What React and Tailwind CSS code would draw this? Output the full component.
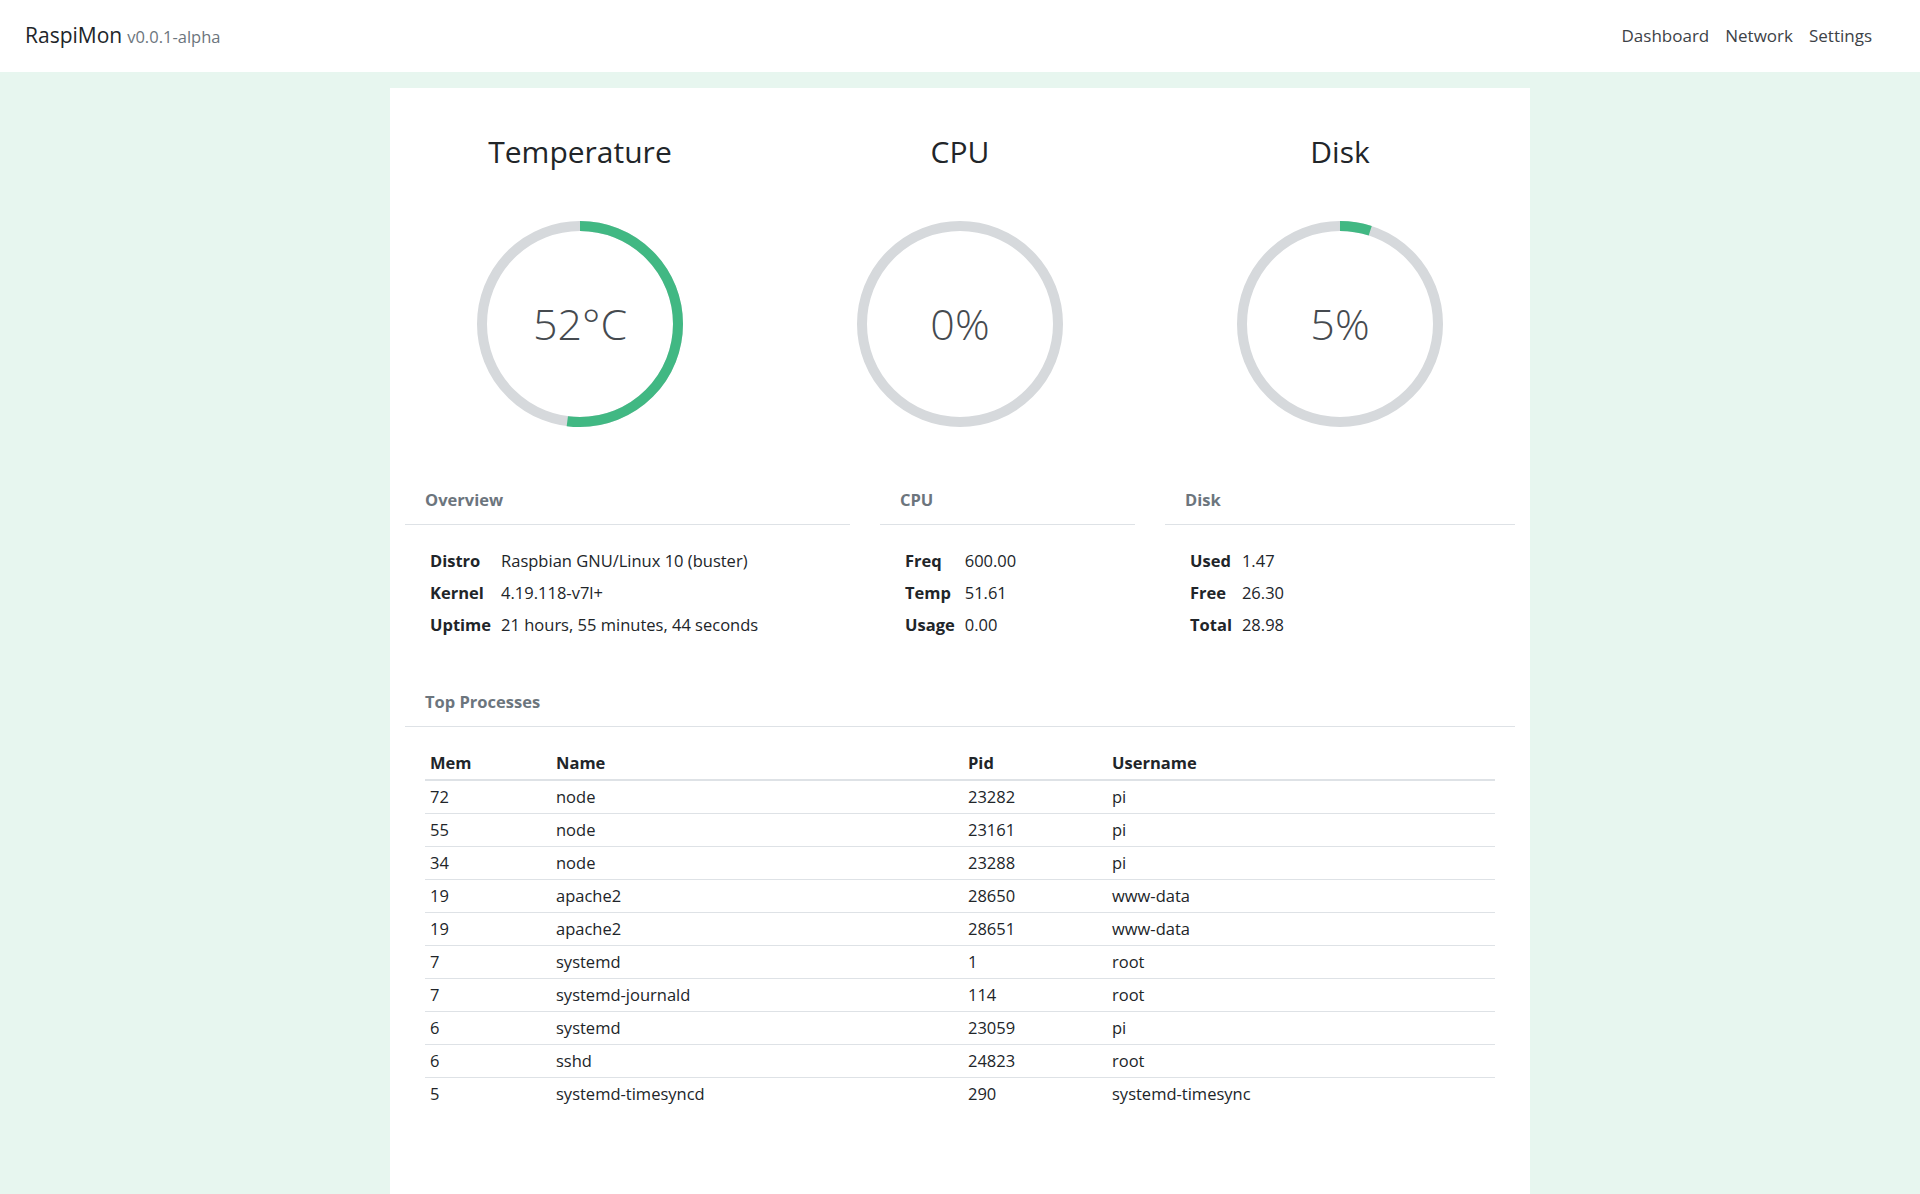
import React from 'react';

const font = { fontFamily: '"Open Sans", "Noto Sans", sans-serif' };

const processes = [
  { mem: 72, name: 'node', pid: 23282, user: 'pi' },
  { mem: 55, name: 'node', pid: 23161, user: 'pi' },
  { mem: 34, name: 'node', pid: 23288, user: 'pi' },
  { mem: 19, name: 'apache2', pid: 28650, user: 'www-data' },
  { mem: 19, name: 'apache2', pid: 28651, user: 'www-data' },
  { mem: 7, name: 'systemd', pid: 1, user: 'root' },
  { mem: 7, name: 'systemd-journald', pid: 114, user: 'root' },
  { mem: 6, name: 'systemd', pid: 23059, user: 'pi' },
  { mem: 6, name: 'sshd', pid: 24823, user: 'root' },
  { mem: 5, name: 'systemd-timesyncd', pid: 290, user: 'systemd-timesync' },
];

const RADIUS = 98;
const CIRC = 2 * Math.PI * RADIUS;

const Gauge = ({ title, value, label }) => (
  <div className="flex flex-col items-center">
    <h2 className="h-10 leading-10 text-[30px] text-[#212529]">{title}</h2>
    <div className="relative mt-[44px] w-[216px] h-[216px]">
      <svg width="216" height="216" viewBox="0 0 216 216">
        <circle cx="108" cy="108" r={RADIUS} fill="none" stroke="#d6d9dc" strokeWidth="10" />
        {value > 0 && (
          <circle
            cx="108"
            cy="108"
            r={RADIUS}
            fill="none"
            stroke="#41b883"
            strokeWidth="10"
            strokeDasharray={`${(CIRC * value) / 100} ${CIRC}`}
            transform="rotate(-90 108 108)"
          />
        )}
      </svg>
      {/* value in the middle of the ring */}
      <div className="absolute inset-0 flex items-center justify-center text-[43px] font-light text-[#454a4f]">
        {label}
      </div>
    </div>
  </div>
);

const InfoCard = ({ title, rows }) => (
  <div>
    <div className="px-5 pt-3 pb-3 border-b border-[#dee2e6]">
      <h3 className="leading-6 text-[16.5px] font-bold text-[#6c757d]">{title}</h3>
    </div>
    <div className="px-5 pt-5 pb-5">
      <table className="text-[16.5px] text-[#212529]">
        <tbody>
          {rows.map(([k, v]) => (
            <tr key={k}>
              <td className="px-[5px] py-1 leading-6 font-bold">{k}</td>
              <td className="px-[5px] py-1 leading-6">{v}</td>
            </tr>
          ))}
        </tbody>
      </table>
    </div>
  </div>
);

export default function App() {
  return (
    <div style={font} className="min-h-screen flex flex-col bg-[#e7f6ef]">
      {/* navbar */}
      <header className="h-[72px] shrink-0 bg-white flex items-center justify-between pl-[25px] pr-[40px]">
        <div className="flex items-baseline">
          <span className="text-[21px] text-[#212529]">RaspiMon</span>
          <span className="ml-[5px] text-[16.5px] text-[#6c757d]">v0.0.1-alpha</span>
        </div>
        <nav className="flex items-center text-[17px] text-[#3d4247]">
          <a className="px-2">Dashboard</a>
          <a className="px-2">Network</a>
          <a className="px-2">Settings</a>
        </nav>
      </header>

      <main className="flex-1 flex justify-center pt-4">
        <div className="w-[1140px] bg-white pt-[44px] pb-10">
          <div className="grid grid-cols-3">
            <Gauge title="Temperature" value={52} label="52°C" />
            <Gauge title="CPU" value={0} label="0%" />
            <Gauge title="Disk" value={5} label="5%" />
          </div>

          <div className="grid grid-cols-12 mt-[44px]">
            <div className="col-span-5 px-[15px]">
              <InfoCard
                title="Overview"
                rows={[
                  ['Distro', 'Raspbian GNU/Linux 10 (buster)'],
                  ['Kernel', '4.19.118-v7l+'],
                  ['Uptime', '21 hours, 55 minutes, 44 seconds'],
                ]}
              />
            </div>
            <div className="col-span-3 px-[15px]">
              <InfoCard
                title="CPU"
                rows={[
                  ['Freq', '600.00'],
                  ['Temp', '51.61'],
                  ['Usage', '0.00'],
                ]}
              />
            </div>
            <div className="col-span-4 px-[15px]">
              <InfoCard
                title="Disk"
                rows={[
                  ['Used', '1.47'],
                  ['Free', '26.30'],
                  ['Total', '28.98'],
                ]}
              />
            </div>
          </div>

          <div className="px-[15px] mt-[17px]">
            <div className="px-5 pt-3 pb-3 border-b border-[#dee2e6]">
              <h3 className="leading-6 text-[16.5px] font-bold text-[#6c757d]">Top Processes</h3>
            </div>
            <div className="px-5 pt-5">
              <table className="w-full table-fixed text-left text-[16.5px] text-[#212529]">
                <thead>
                  <tr>
                    <th className="w-[126px] px-[5px] py-1 leading-6 font-bold border-b-2 border-[#dee2e6]">Mem</th>
                    <th className="w-[412px] px-[5px] py-1 leading-6 font-bold border-b-2 border-[#dee2e6]">Name</th>
                    <th className="w-[144px] px-[5px] py-1 leading-6 font-bold border-b-2 border-[#dee2e6]">Pid</th>
                    <th className="px-[5px] py-1 leading-6 font-bold border-b-2 border-[#dee2e6]">Username</th>
                  </tr>
                </thead>
                <tbody>
                  {processes.map((p) => (
                    <tr key={p.pid} className="border-t border-[#dee2e6]">
                      <td className="px-[5px] py-1 leading-6">{p.mem}</td>
                      <td className="px-[5px] py-1 leading-6">{p.name}</td>
                      <td className="px-[5px] py-1 leading-6">{p.pid}</td>
                      <td className="px-[5px] py-1 leading-6">{p.user}</td>
                    </tr>
                  ))}
                </tbody>
              </table>
            </div>
          </div>
        </div>
      </main>
    </div>
  );
}
